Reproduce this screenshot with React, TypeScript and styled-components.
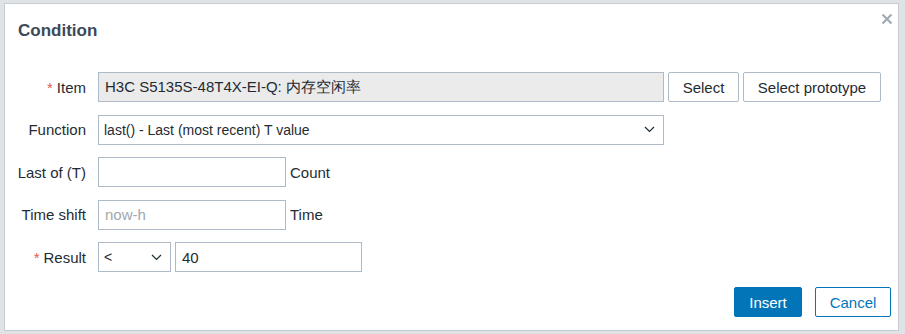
import React from "react";
import styled, { createGlobalStyle } from "styled-components";

const Global = createGlobalStyle`
  html, body { margin: 0; padding: 0; }
  body { font-family: "Liberation Sans", Arial, sans-serif; background: #dfe3e6; }
  * { box-sizing: border-box; }
`;

const Backdrop = styled.div`
  width: 905px;
  height: 334px;
  padding: 3px 6px 3px 4px;
  background: #dfe3e6;
`;

const Modal = styled.div`
  position: relative;
  height: 328px;
  background: #fff;
  border: 1px solid #c6cdd2;
  display: flex;
  flex-direction: column;
`;

const Header = styled.div`
  height: 68px;
  padding: 16px 0 0 13px;
`;

const Title = styled.h4`
  margin: 0;
  font-size: 17px;
  font-weight: bold;
  color: #3b4a57;
  line-height: 22px;
`;

const Close = styled.button`
  position: absolute;
  top: 5px;
  right: 1px;
  width: 20px;
  height: 20px;
  padding: 0;
  border: 0;
  background: none;
  display: flex;
  align-items: center;
  justify-content: center;
`;

const Form = styled.div`
  display: grid;
  grid-template-columns: 81px auto;
  column-gap: 12px;
  row-gap: 12.5px;
  align-items: center;
`;

const Label = styled.label`
  text-align: right;
  font-size: 15px;
  color: #1f2c33;
  white-space: nowrap;
`;

const Req = styled.span`
  color: #e45959;
  margin-right: 4px;
`;

const Field = styled.div`
  display: flex;
  align-items: center;
  gap: 4px;
`;

const Input = styled.input<{ $w: number; $disabled?: boolean }>`
  width: ${(p) => p.$w}px;
  height: 30px;
  border: 1px solid #acbbc7;
  background: ${(p) => (p.$disabled ? "#ebebeb" : "#fff")};
  font-family: "Liberation Sans", Arial, sans-serif;
  font-size: 15px;
  color: #1f2c33;
  padding: 0 6px;
  outline: none;
  &::placeholder { color: #a0a8ad; }
`;

const SelectBox = styled.div<{ $w: number }>`
  width: ${(p) => p.$w}px;
  height: 30px;
  border: 1px solid #acbbc7;
  background: #fff;
  display: flex;
  align-items: center;
  justify-content: space-between;
  padding: 0 8px 0 5px;
  font-size: 14px;
  color: #1f2c33;
`;

const Unit = styled.span`
  font-size: 15px;
  color: #1f2c33;
`;

const Btn = styled.button<{ $variant?: "primary" | "outline" | "plain"; $w: number }>`
  width: ${(p) => p.$w}px;
  height: 30px;
  padding: 0;
  font-family: "Liberation Sans", Arial, sans-serif;
  font-size: 15px;
  border-radius: 2px;
  cursor: pointer;
  border: 1px solid
    ${(p) => (p.$variant === "plain" ? "#acbbc7" : "#0275b8")};
  background: ${(p) => (p.$variant === "primary" ? "#0275b8" : "#fff")};
  color: ${(p) =>
    p.$variant === "primary" ? "#fff" : p.$variant === "outline" ? "#0275b8" : "#1f2c33"};
`;

const Footer = styled.div`
  margin-top: auto;
  display: flex;
  justify-content: flex-end;
  gap: 13px;
  padding: 0 7px 13px 0;
`;

const Chevron = () => (
  <svg width="11" height="7" viewBox="0 0 11 7">
    <path d="M1 1l4.5 4.5L10 1" fill="none" stroke="#1f2c33" strokeWidth="1.2" />
  </svg>
);

export default function App() {
  return (
    <>
      <Global />
      <Backdrop>
        <Modal>
          <Header>
            <Title>Condition</Title>
          </Header>
          <Close aria-label="Close">
            <svg width="12" height="12" viewBox="0 0 12 12">
              <path d="M1.5 1.5l9 9M10.5 1.5l-9 9" stroke="#a3acb3" strokeWidth="2.2" />
            </svg>
          </Close>
          <Form>
            <Label>
              <Req>*</Req>Item
            </Label>
            <Field>
              <Input $w={566} $disabled readOnly value="H3C S5135S-48T4X-EI-Q: 内存空闲率" />
              <Btn $variant="plain" $w={71}>Select</Btn>
              <Btn $variant="plain" $w={138}>Select prototype</Btn>
            </Field>

            <Label>Function</Label>
            <Field>
              <SelectBox $w={566}>
                <span>last() - Last (most recent) T value</span>
                <Chevron />
              </SelectBox>
            </Field>

            <Label>Last of (T)</Label>
            <Field>
              <Input $w={188} />
              <Unit>Count</Unit>
            </Field>

            <Label>Time shift</Label>
            <Field>
              <Input $w={188} placeholder="now-h" />
              <Unit>Time</Unit>
            </Field>

            <Label>
              <Req>*</Req>Result
            </Label>
            <Field>
              <SelectBox $w={73}>
                <span>&lt;</span>
                <Chevron />
              </SelectBox>
              <Input $w={187} readOnly value="40" />
            </Field>
          </Form>
          <Footer>
            <Btn $variant="primary" $w={68}>Insert</Btn>
            <Btn $variant="outline" $w={76}>Cancel</Btn>
          </Footer>
        </Modal>
      </Backdrop>
    </>
  );
}
